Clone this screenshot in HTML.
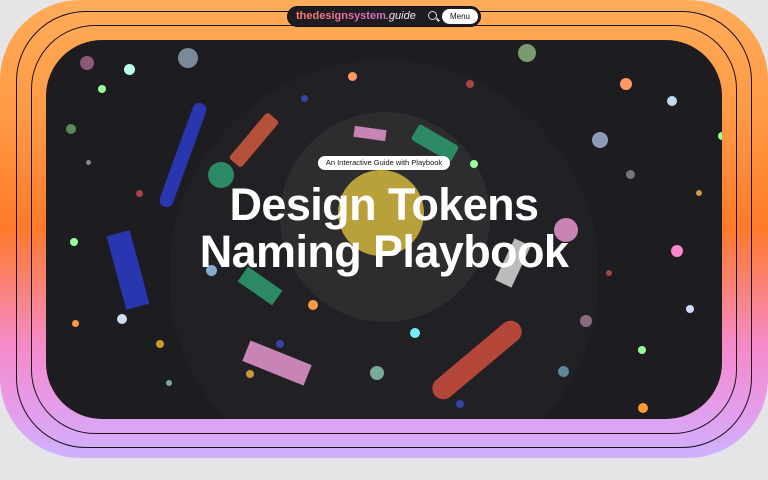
<!DOCTYPE html>
<html><head><meta charset="utf-8"><style>
*{margin:0;padding:0;box-sizing:border-box}
body{width:768px;height:480px;overflow:hidden;background:#e5e5e7;font-family:"Liberation Sans",sans-serif;position:relative}
.outer{position:absolute;left:0;top:0;width:768px;height:458px;border-radius:80px;
background:linear-gradient(180deg,#ffac5a 0%,#ff9a45 25%,#ff7a2a 50%,#f58ac8 75%,#e79ae8 88%,#cdb2ff 100%)}
.l1{position:absolute;left:16px;top:11px;width:736px;height:437px;border:1.5px solid #1a1418;border-radius:70px}
.l2{position:absolute;left:31px;top:25px;width:706px;height:409px;border:1.5px solid #1a1418;border-radius:64px}
.panel{position:absolute;left:46px;top:40px;width:676px;height:379px;background:#1d1c20;border-radius:56px;overflow:hidden}
.d{position:absolute;border-radius:50%}
.nav{position:absolute;left:287px;top:6px;width:194px;height:21px;background:#1e1b21;border-radius:11px;border:1.5px solid #111}
.logo{position:absolute;left:8px;top:3px;font-size:11px;font-weight:bold;background:linear-gradient(90deg,#ff7b6b,#c26ae8);-webkit-background-clip:text;color:transparent}
.logo i{font-weight:normal;color:#ddd;-webkit-text-fill-color:#ddd}
.menu{position:absolute;right:2px;top:2px;width:36px;height:15px;background:#fff;border-radius:8px;font-size:8px;text-align:center;line-height:15px;color:#111}
.t{position:absolute;left:0;width:676px;text-align:center;color:#fff;font-weight:bold;font-size:45px;letter-spacing:-0.6px;line-height:48px}
.pill{position:absolute;left:272px;top:116px;width:132px;height:14px;background:#fff;border-radius:7px;font-size:7.5px;color:#111;text-align:center;line-height:14px}
</style></head><body>
<div class="outer"></div><div class="l1"></div><div class="l2"></div>
<div class="panel">
<div class="d" style="width:430px;height:430px;background:#212024;left:123px;top:20px"></div>
<div class="d" style="left:234px;top:72px;width:210px;height:210px;background:#2d2d2f"></div>
<div class="d" style="left:292px;top:130px;width:86px;height:86px;background:#b8a03a"></div>
<div style="position:absolute;left:130px;top:60px;width:14px;height:110px;background:#2a35b0;border-radius:7px;transform:rotate(20deg)"></div>
<div style="position:absolute;left:200px;top:70px;width:16px;height:60px;background:#b5503a;border-radius:3px;transform:rotate(40deg)"></div>
<div style="position:absolute;left:380px;top:80px;width:18px;height:46px;background:#2b8a63;border-radius:3px;transform:rotate(-60deg)"></div>
<div style="position:absolute;left:308px;top:88px;width:32px;height:11px;background:#c784b5;transform:rotate(8deg)"></div>
<div style="position:absolute;left:70px;top:192px;width:24px;height:76px;background:#2a35b0;transform:rotate(-15deg)"></div>
<div style="position:absolute;left:205px;top:225px;width:18px;height:42px;background:#2b8a63;transform:rotate(-55deg)"></div>
<div style="position:absolute;left:220px;top:290px;width:22px;height:66px;background:#c784b5;transform:rotate(-68deg)"></div>
<div style="position:absolute;left:420px;top:265px;width:22px;height:110px;background:#b5463a;border-radius:11px;transform:rotate(50deg)"></div>
<div style="position:absolute;left:458px;top:200px;width:18px;height:46px;background:#bbb;transform:rotate(25deg)"></div>
<div class="d" style="left:162px;top:122px;width:26px;height:26px;background:#2b8a63"></div>
<div class="d" style="left:508px;top:178px;width:24px;height:24px;background:#c784b5"></div>
<div class="d" style="left:34px;top:16px;width:14px;height:14px;background:#8a5a78"></div>
<div class="d" style="left:78px;top:24px;width:11px;height:11px;background:#bfe"></div>
<div class="d" style="left:132px;top:8px;width:20px;height:20px;background:#7a8a9a"></div>
<div class="d" style="left:472px;top:4px;width:18px;height:18px;background:#7a9a70"></div>
<div class="d" style="left:52px;top:45px;width:8px;height:8px;background:#9f9"></div>
<div class="d" style="left:574px;top:38px;width:12px;height:12px;background:#f96"></div>
<div class="d" style="left:621px;top:56px;width:10px;height:10px;background:#bde"></div>
<div class="d" style="left:546px;top:92px;width:16px;height:16px;background:#8a9ab8"></div>
<div class="d" style="left:424px;top:120px;width:8px;height:8px;background:#9f9"></div>
<div class="d" style="left:302px;top:32px;width:9px;height:9px;background:#f96"></div>
<div class="d" style="left:20px;top:84px;width:10px;height:10px;background:#5a8a5a"></div>
<div class="d" style="left:625px;top:205px;width:12px;height:12px;background:#f8c"></div>
<div class="d" style="left:160px;top:225px;width:11px;height:11px;background:#8ac"></div>
<div class="d" style="left:262px;top:260px;width:10px;height:10px;background:#f94"></div>
<div class="d" style="left:324px;top:326px;width:14px;height:14px;background:#7a9"></div>
<div class="d" style="left:364px;top:288px;width:10px;height:10px;background:#7ef"></div>
<div class="d" style="left:592px;top:306px;width:8px;height:8px;background:#9f9"></div>
<div class="d" style="left:592px;top:363px;width:10px;height:10px;background:#f93"></div>
<div class="d" style="left:534px;top:275px;width:12px;height:12px;background:#8a6a80"></div>
<div class="d" style="left:71px;top:274px;width:10px;height:10px;background:#cde"></div>
<div class="d" style="left:24px;top:198px;width:8px;height:8px;background:#9f9"></div>
<div class="d" style="left:26px;top:280px;width:7px;height:7px;background:#f94"></div>
<div class="d" style="left:512px;top:326px;width:11px;height:11px;background:#5a8a9a"></div>
<div class="d" style="left:672px;top:92px;width:8px;height:8px;background:#9f9"></div>
<div class="d" style="left:640px;top:265px;width:8px;height:8px;background:#cdf"></div>
<div class="d" style="left:200px;top:330px;width:8px;height:8px;background:#c93"></div>
<div class="d" style="left:110px;top:300px;width:8px;height:8px;background:#c93"></div>
<div class="d" style="left:580px;top:130px;width:9px;height:9px;background:#777"></div>
<div class="d" style="left:90px;top:150px;width:7px;height:7px;background:#a44"></div>
<div class="d" style="left:410px;top:360px;width:8px;height:8px;background:#34a"></div>
<div class="d" style="left:255px;top:55px;width:7px;height:7px;background:#34a"></div>
<div class="d" style="left:230px;top:300px;width:8px;height:8px;background:#34a"></div>
<div class="d" style="left:560px;top:230px;width:6px;height:6px;background:#a44"></div>
<div class="d" style="left:650px;top:150px;width:6px;height:6px;background:#c94"></div>
<div class="d" style="left:120px;top:340px;width:6px;height:6px;background:#7a9"></div>
<div class="d" style="left:40px;top:120px;width:5px;height:5px;background:#888"></div>
<div class="d" style="left:420px;top:40px;width:8px;height:8px;background:#a44"></div>
<div class="pill">An Interactive Guide with Playbook</div>
<div class="t" style="top:141px">Design Tokens</div>
<div class="t" style="top:188px">Naming Playbook</div>
</div>
<div class="nav"><div class="logo">thedesignsystem<i>.guide</i></div>
<div style="position:absolute;left:140px;top:4px;width:9px;height:9px;border:1.5px solid #ddd;border-radius:50%"></div>
<div style="position:absolute;left:148px;top:12px;width:4px;height:1.5px;background:#ddd;transform:rotate(45deg)"></div>
<div class="menu">Menu</div></div>
</body></html>
